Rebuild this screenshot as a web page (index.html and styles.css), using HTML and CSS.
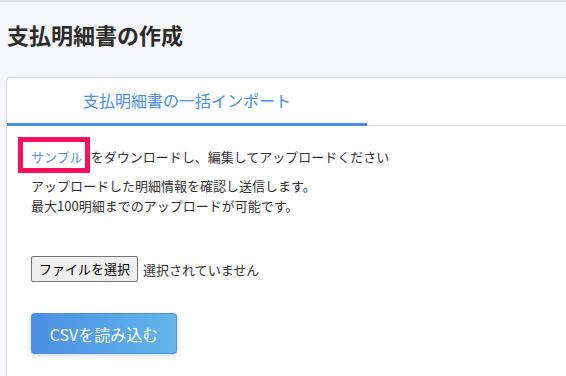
FILE: index.html
```html
<!DOCTYPE html>
<html lang="ja">
<head>
<meta charset="utf-8">
<title>支払明細書の作成</title>
<link rel="stylesheet" href="styles.css">
</head>
<body>
<div class="page">
  <h1 class="title">支払明細書の作成</h1>
  <div class="card">
    <ul class="tabs">
      <li class="tab active">支払明細書の一括インポート</li>
    </ul>
    <div class="panel">
      <p class="lead"><a class="sample" href="#">サンプル</a>をダウンロードし、編集してアップロードください</p>
      <p class="note">アップロードした明細情報を確認し送信します。<br>最大100明細までのアップロードが可能です。</p>
      <div class="file-row">
        <span class="file-btn">ファイルを選択</span><span class="file-status">選択されていません</span>
      </div>
      <button class="csv-btn" type="button">CSVを読み込む</button>
    </div>
  </div>
</div>
</body>
</html>
```
FILE: styles.css
```css
html, body {
  margin: 0;
  padding: 0;
}
body {
  background: #f5f6fa;
  font-family: "Noto Sans CJK JP", "Noto Sans", sans-serif;
  color: #333;
  border-top: 2px solid #e1e2e7;
  height: 374px;
  overflow: hidden;
}
.page {
  padding: 0 0 0 6px;
}
.title {
  margin: 21px 0 32px 1px;
  font-size: 22px;
  line-height: 22px;
  font-weight: 700;
  color: #2b2b2b;
}
.card {
  background: #fff;
  border: 1px solid #dddde0;
  border-right: none;
  border-bottom: none;
  border-radius: 4px 0 0 0;
  height: 298px;
  overflow: hidden;
}
.tabs {
  list-style: none;
  margin: 0;
  padding: 0;
  display: flex;
  border-bottom: 1px solid #dddddd;
}
.tab {
  width: 360px;
  height: 45px;
  line-height: 45px;
  text-align: center;
  font-size: 16px;
  color: #4a8fe2;
  margin-bottom: -1px;
}
.tab.active {
  border-bottom: 3px solid #4a8fe2;
}
.panel {
  padding: 21px 0 0 24px;
  font-size: 13px;
}
.lead {
  margin: 0;
  line-height: 20px;
}
.sample {
  position: relative;
  display: inline-block;
  color: #5a8fe6;
  text-decoration: none;
  margin-right: 8px;
}
.sample::after {
  content: "";
  position: absolute;
  left: -13px;
  right: -7px;
  top: -10px;
  bottom: -6px;
  border: 5px solid #fe0f5d;
}
.note {
  margin: 9px 0 0;
  line-height: 20px;
}
.file-row {
  margin-top: 40px;
  display: flex;
  align-items: center;
}
.file-btn {
  display: inline-block;
  box-sizing: border-box;
  height: 26px;
  line-height: 24px;
  padding: 0 7px;
  background: #efefef;
  border: 1px solid #767676;
  border-radius: 2px;
  color: #000;
  font-size: 13px;
}
.file-status {
  margin-left: 5px;
  color: #333;
}
.csv-btn {
  display: block;
  margin-top: 31px;
  box-sizing: border-box;
  width: 146px;
  height: 41px;
  border: 1px solid #4f92e2;
  border-radius: 3px;
  background: linear-gradient(to right, #4a8fe0, #63b6ec);
  color: #fff;
  font-family: "Noto Sans CJK JP", "Noto Sans", sans-serif;
  font-size: 16px;
  box-shadow: 0 2px 5px rgba(0, 0, 0, 0.15);
  padding: 0;
}
```
